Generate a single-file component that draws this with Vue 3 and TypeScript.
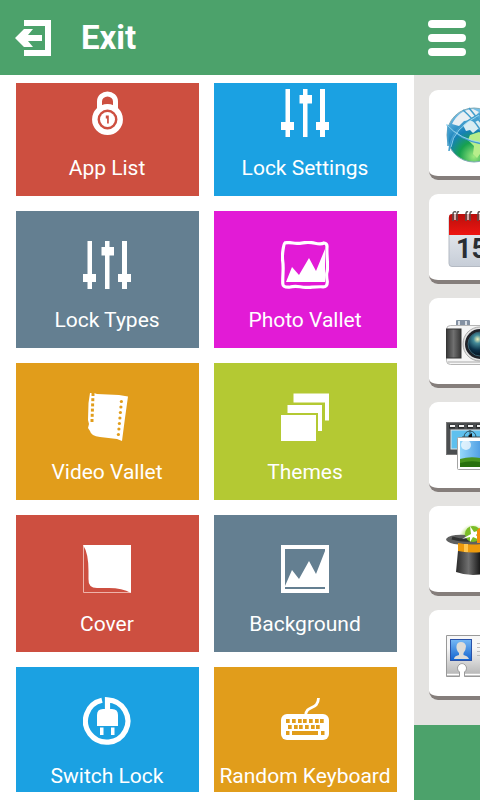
<script setup lang="ts">
type Tile = { label: string; icon: string; color: string }

const tiles: Tile[] = [
  { label: 'App List', icon: 'lock', color: 'red' },
  { label: 'Lock Settings', icon: 'sliders', color: 'blue' },
  { label: 'Lock Types', icon: 'sliders', color: 'slate' },
  { label: 'Photo Vallet', icon: 'photo', color: 'magenta' },
  { label: 'Video Vallet', icon: 'film', color: 'orange' },
  { label: 'Themes', icon: 'themes', color: 'lime' },
  { label: 'Cover', icon: 'cover', color: 'red' },
  { label: 'Background', icon: 'background', color: 'slate' },
  { label: 'Switch Lock', icon: 'plug', color: 'blue' },
  { label: 'Random Keyboard', icon: 'keyboard', color: 'orange' },
]

const apps: string[] = ['Browser', 'Calendar', 'Camera', 'Gallery', 'Magic', 'Contacts']

const filmHoles = [0, 1, 2, 3, 4, 5, 6]
const keyColumns = [5, 11, 17, 22, 28, 34, 39]
const keyColumnsLower = [7, 13, 18, 24, 30, 35]
</script>

<template>
  <div class="screen">
    <header class="bar">
      <button class="exit" type="button">
        <svg width="36" height="36" viewBox="0 0 36 36" fill="#fff" aria-hidden="true">
          <path d="M9 0H36V36H9V30H30V6H9Z" />
          <path d="M0 18L9 9H18L13 15H27V21H13L18 27H9Z" />
        </svg>
        <span>Exit</span>
      </button>
      <button class="menu" type="button" aria-label="Menu">
        <i></i><i></i><i></i>
      </button>
    </header>

    <div class="body">
      <nav class="drawer">
        <div class="viewport">
          <div class="grid">
            <button v-for="t in tiles" :key="t.label" type="button" class="tile" :class="t.color">
              <svg width="48" height="48" viewBox="0 0 48 48" fill="#fff" aria-hidden="true">
                <g v-if="t.icon === 'lock'">
                  <path d="M16.500 20V12.500a8 7.500 0 0 1 16 0V20" fill="none" stroke="#fff" stroke-width="5" />
                  <circle cx="24.500" cy="30.500" r="12.700" fill="none" stroke="#fff" stroke-width="5.500" />
                  <circle cx="24.500" cy="30.500" r="7.500" />
                  <path d="M22.800 26.500h3v8h-1.700v-5h-1.300z" fill="#cd4f40" />
                </g>
                <g v-else-if="t.icon === 'sliders'">
                  <path d="M4.500 0H9V33h4v8H9v7H4.500v-7H0v-8h4.500zM22 0h4.500v6h4.500v8.500h-4.500V48H22V14.500h-3.500V6H22zM39 0h5v33h4v8h-4v7h-5v-7h-4v-8h4z" />
                </g>
                <g v-else-if="t.icon === 'photo'">
                  <path d="M4 1.800Q8 1.200 12 2T22 1.800T34 2.200T43 2Q46.300 2.500 46 6T46.300 19T46 31T46.300 41Q46.300 46 42 45.800T31 46.200T19 45.800T8 46.200Q2 46.400 1.800 43T2 32T1.700 20T2 9T4 1.800Z" fill="none" stroke="#fff" stroke-width="3.200" />
                  <path d="M5 41L11 26L18 34L28 17L35 30L44 8V41Z" />
                </g>
                <g v-else-if="t.icon === 'background'">
                  <path fill-rule="evenodd" d="M0 0H48V48H0ZM4 4V44H44V4Z" />
                  <path d="M4 41L11 25L18 34L28 16L35 29L44 6V42H4Z" />
                </g>
                <g v-else-if="t.icon === 'film'">
                  <path d="M7 0H11L14 1L36 2L45 3.500L42 25L39 48L34 46L17 44Q8 43 7 38L5 35L6 31L5 27L5.500 10Z" />
                  <path v-for="n in filmHoles.slice(0, 6)" :key="'l' + n" :d="`M${8.500 - n * 0.2} ${n * 5.2}h3v3h-3z`" fill="#e19d1b" />
                  <circle v-for="n in filmHoles" :key="'r' + n" :cx="38.400 - n * 0.5" :cy="8.500 + n * 5.500" r="1.600" fill="#e19d1b" />
                </g>
                <g v-else-if="t.icon === 'themes'">
                  <path d="M0 22H35V48H0ZM6.500 12H41V38H37V20H6.500ZM12.500 0.500H48V27.500H44V9.500H12.500Z" />
                </g>
                <g v-else-if="t.icon === 'cover'">
                  <path d="M.5 .5V47.500H47.500" fill="none" stroke="#eeb3aa" stroke-width="1" />
                  <path d="M0 0H48V48Q39 43 26 43H14Q5 43 5.500 34V26Q5.500 8 0 0Z" />
                </g>
                <g v-else-if="t.icon === 'plug'">
                  <path d="M19 3.300A21.200 21.200 0 1 0 24.500 2.800V15" fill="none" stroke="#fff" stroke-width="5.200" />
                  <path d="M14 29V18Q14 12 20 12H29Q35 12 35 18V29ZM17 30.500H20.500V38H17ZM28 30.500H31.500V38H28Z" />
                </g>
                <g v-else>
                  <path d="M24.500 19C25 7 37 14 37.500 1" fill="none" stroke="#fff" stroke-width="2.800" />
                  <rect y="17" width="48" height="26" rx="6" />
                  <g fill="#e19d1b">
                    <rect v-for="x in keyColumns" :key="'a' + x" :x="x" y="22" width="3.700" height="4" />
                    <rect v-for="x in keyColumnsLower" :key="'b' + x" :x="x" y="28" width="3.700" height="4" />
                    <path d="M5 34h3.500v4H5zM11 34h26v4H11zM40 34h3.500v4H40z" />
                  </g>
                </g>
              </svg>
              <span>{{ t.label }}</span>
            </button>
          </div>
        </div>
      </nav>

      <main class="page">
        <div class="apps">
          <button v-for="name in apps" :key="name" type="button" class="app" :aria-label="name">
            <svg width="56" height="56" viewBox="0 0 56 56" aria-hidden="true">
              <g v-if="name === 'Browser'">
                <defs>
                  <radialGradient id="sea" cx=".5" cy=".9" r=".9">
                    <stop offset="0" stop-color="#9dea7e" />
                    <stop offset=".3" stop-color="#17a14e" />
                    <stop offset=".55" stop-color="#1680b8" />
                    <stop offset="1" stop-color="#7cc4ec" />
                  </radialGradient>
                </defs>
                <circle cx="28" cy="28" r="27" fill="url(#sea)" stroke="#7fa9b4" />
                <path d="M6 17Q13 3 27 2L33 5L26 13L18 14L13 19Z" fill="#e9eff3" />
                <path d="M17 18L22 13L29 15L37 11V24L32 22L27 26L24 23L20 24Z" fill="#d8ecf2" />
                <path d="M24 28L33 25L42 30L37 43L31 51L27 47L28 39L22 33Z" fill="#b7ee8b" />
                <path d="M1 18Q15 34 38 37M3 44Q4 21 34 7M17 3Q33 17 40 34M2 19V39M23 1L36 17" fill="none" stroke="#429dcc" stroke-width="1.500" />
                <path d="M0 17Q14 33 38 36M5 40Q7 22 33 8" fill="none" stroke="#a5e0f6" stroke-width=".8" />
              </g>
              <g v-else-if="name === 'Calendar'">
                <defs>
                  <linearGradient id="sheet" x2="0" y2="1">
                    <stop offset="0" stop-color="#f1f3f6" />
                    <stop offset="1" stop-color="#c6cdd7" />
                  </linearGradient>
                  <linearGradient id="cap" x2="0" y2="1">
                    <stop offset="0" stop-color="#b90f0c" />
                    <stop offset="1" stop-color="#ee1511" />
                  </linearGradient>
                </defs>
                <rect x="3" y="4" width="53" height="51.500" rx="3" fill="url(#sheet)" stroke="#b4bac3" />
                <path d="M3 24V6Q3 3 6 3H56V24Z" fill="url(#cap)" />
                <g fill="none" stroke="#59504d" stroke-width="1.500">
                  <path d="M7 10V3Q7 0 10 1M11 10V3Q11 0 13 1M20 10V3Q20 0 22 1M24 10V3Q24 0 26 1M32 10V3Q32 0 34 1M36 10V3Q36 0 38 1" />
                </g>
                <path d="M9 9V3M22 9V3M34 9V3" stroke="#ddd" stroke-width="1.500" />
                <text x="10" y="47" class="day">15</text>
              </g>
              <g v-else-if="name === 'Camera'">
                <defs>
                  <linearGradient id="grip">
                    <stop offset="0" stop-color="#343434" />
                    <stop offset=".5" stop-color="#707070" />
                    <stop offset="1" stop-color="#353535" />
                  </linearGradient>
                  <radialGradient id="lens" cx=".4" cy=".3" r=".7">
                    <stop offset="0" stop-color="#f2f2b7" />
                    <stop offset=".25" stop-color="#448b99" />
                    <stop offset=".65" stop-color="#0b3149" />
                    <stop offset="1" stop-color="#06121e" />
                  </radialGradient>
                </defs>
                <rect x="10" y="5" width="14" height="7" rx="1" fill="#8491a2" />
                <path d="M13 6V10M20 6V10" stroke="#d7dde5" stroke-width="2" />
                <rect x=".5" y="10.500" width="55" height="39" rx="4" fill="#f5f5f5" stroke="#b5b5b5" />
                <path d="M2 47H54" stroke="#d0d0d0" stroke-width="2" />
                <rect x="0" y="14" width="15" height="29" fill="url(#grip)" stroke="#333" />
                <circle cx="34" cy="29" r="17" fill="#e4e4e4" stroke="#aaa" />
                <circle cx="34" cy="29" r="15" fill="#202329" />
                <circle cx="34" cy="29" r="12" fill="url(#lens)" stroke="#376070" />
              </g>
              <g v-else-if="name === 'Gallery'">
                <defs>
                  <linearGradient id="sky" x2="1" y2="0">
                    <stop offset="0" stop-color="#95d8fa" />
                    <stop offset="1" stop-color="#126bd0" />
                  </linearGradient>
                </defs>
                <rect x=".5" y="3.500" width="55" height="32" fill="#4b4e50" stroke="#777" />
                <path d="M3 7.500H9M12 7.500H18M21 7.500H27M30 7.500H36" stroke="#292b2c" stroke-width="4" />
                <path d="M4 7H9M13 7H18M22 7H27M31 7H36" stroke="#f4f4f4" stroke-width="2" />
                <rect x="5" y="11" width="51" height="19" fill="#5fc0ee" stroke="#dfe4e6" />
                <circle cx="24" cy="18" r="6" fill="none" stroke="#324f5b" />
                <path d="M16 18H34M24 11V25" stroke="#324f5b" />
                <path d="M22 17L26 14V21Z" fill="#111" />
                <rect x="11.500" y="18.500" width="44" height="32" rx="1" fill="#fff" stroke="#a4a4a4" />
                <rect x="14" y="22" width="39" height="26" fill="url(#sky)" />
                <circle cx="20" cy="26" r="5" fill="#fff" opacity=".7" />
                <path d="M14 40Q24 37 34 39H53V48H14Z" fill="#48941e" />
                <path d="M14 44Q24 41 34 43H53V48H14Z" fill="#28710d" />
              </g>
              <g v-else-if="name === 'Magic'">
                <defs>
                  <radialGradient id="glow">
                    <stop offset=".4" stop-color="#74b51c" />
                    <stop offset="1" stop-color="#b5e060" stop-opacity="0" />
                  </radialGradient>
                  <linearGradient id="hat">
                    <stop offset="0" stop-color="#292929" />
                    <stop offset=".35" stop-color="#707070" />
                    <stop offset=".7" stop-color="#111" />
                  </linearGradient>
                </defs>
                <circle cx="27" cy="15" r="14" fill="url(#glow)" />
                <path d="M0 16Q4 11 20 12H56V18Q33 25 8 21Q0 19 0 16Z" fill="#5f6060" />
                <path d="M6 15Q18 19 36 16" fill="none" stroke="#303131" stroke-width="3" />
                <circle cx="27" cy="11" r="8" fill="#7abd27" />
                <path d="M16 16L25 11L24 3L28 9L35 7L30 12L34 17L27 14L24 19L24 14Z" fill="#fff" />
                <path d="M31 7L35 4V20H31Z" fill="#f58b09" />
                <path d="M12 28L10 49Q26 55 46 49L44 28Z" fill="url(#hat)" />
                <path d="M12 20Q26 23 45 20V28Q28 31 12 28Z" fill="#ed9a0c" />
                <path d="M20 21V29" stroke="#ffc54d" stroke-width="4" />
              </g>
              <g v-else>
                <defs>
                  <linearGradient id="paper" x2="0" y2="1">
                    <stop offset=".3" stop-color="#f7f7f7" />
                    <stop offset="1" stop-color="#b2b2b2" />
                  </linearGradient>
                  <linearGradient id="portrait" x2="0" y2="1">
                    <stop offset="0" stop-color="#77b9f5" />
                    <stop offset="1" stop-color="#1263cf" />
                  </linearGradient>
                </defs>
                <path d="M.5 8.500H56V49.500H18.500V45A4.500 4.500 0 1 0 13.500 45V49.500H.5Z" fill="url(#paper)" stroke="#999" />
                <path d="M1 47.500H13M19 47.500H56" fill="none" stroke="#fff" stroke-width="1.500" />
                <path d="M14.500 49V44A3.500 3.500 0 1 1 17.500 44V49Z" fill="#fff" />
                <rect x="4.500" y="12.500" width="21" height="21" fill="url(#portrait)" stroke="#2951a8" />
                <path d="M8 32Q8 29 13 28V26Q10 23 10.500 19Q11 15 15 15Q19 15 20 19Q20 23 17.500 26V28Q22 29 23 32Z" fill="#dedcd7" />
                <path d="M31 16.500H56M31 20.500H56M31 24.500H56M31 28.500H56" stroke="#bbb" />
              </g>
            </svg>
          </button>
        </div>
        <footer class="foot"></footer>
      </main>
    </div>
  </div>
</template>

<style>
body {
  margin: 0;
}
</style>

<style scoped>
.screen {
  display: flex;
  flex-direction: column;
  height: 100vh;
  overflow: hidden;
  background: #fff;
  font-family: Roboto, "Liberation Sans", sans-serif;
}

button {
  margin: 0;
  padding: 0;
  border: 0;
  background: none;
  color: inherit;
  font: inherit;
  cursor: pointer;
}

svg {
  display: block;
  flex: none;
}

.bar {
  display: flex;
  flex: none;
  align-items: center;
  justify-content: space-between;
  box-sizing: border-box;
  height: 75px;
  padding: 0 14px 0 15px;
  background: #4ca26b;
  color: #fff;
}

.exit {
  display: flex;
  align-items: center;
  gap: 30px;
  font-size: 33px;
  line-height: 40px;
  font-weight: 700;
}

.menu {
  display: flex;
  flex-direction: column;
  gap: 6px;
  width: 38px;
}

.menu i {
  height: 8px;
  border-radius: 4px;
  background: #fff;
}

.body {
  display: flex;
  flex: 1;
  min-height: 0;
}

.drawer {
  display: flex;
  flex: 1;
  min-width: 0;
  box-sizing: border-box;
  padding: 8px 17px 8px 16px;
}

.viewport {
  flex: 1;
  min-width: 0;
  overflow: hidden;
}

/* The list rests slightly scrolled, so the first row is partly hidden. */
.grid {
  display: grid;
  grid-template-columns: repeat(2, minmax(0, 1fr));
  gap: 15px;
  margin-top: -24px;
}

.tile {
  display: flex;
  flex-direction: column;
  align-items: center;
  gap: 18px;
  box-sizing: border-box;
  height: 137px;
  padding: 30px 1px 0 0;
  color: #fff;
  font-size: 21px;
  line-height: 26px;
  white-space: nowrap;
}

.red {
  background: #cd4f40;
}

.blue {
  background: #1ba1e2;
}

.slate {
  background: #647f91;
}

.magenta {
  background: #e21bd6;
}

.orange {
  background: #e19d1b;
}

.lime {
  background: #b4c933;
}

.page {
  display: flex;
  flex: none;
  flex-direction: column;
  width: 66px;
  overflow: hidden;
  background: #e4e3e1;
}

.apps {
  display: flex;
  flex: 1;
  flex-direction: column;
  gap: 14px;
  min-height: 0;
  padding: 15px 0 0 15px;
}

.app {
  display: flex;
  flex: none;
  align-items: center;
  justify-content: center;
  box-sizing: border-box;
  width: 90px;
  height: 90px;
  padding-top: 4px;
  border-bottom: 4px solid #857e7b;
  border-radius: 9px;
  background: #fff;
}

.day {
  font-size: 27px;
  font-weight: 700;
  fill: #292d33;
}

.foot {
  flex: none;
  height: 75px;
  background: #4ca26b;
}
</style>
